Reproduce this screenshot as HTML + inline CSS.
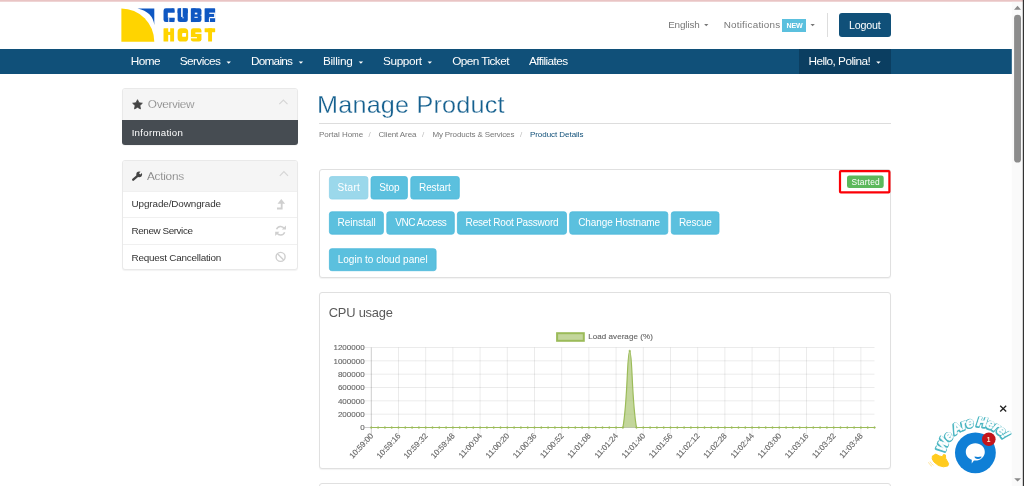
<!DOCTYPE html>
<html><head><meta charset="utf-8"><title>Manage Product</title>
<style>
*{box-sizing:border-box;margin:0;padding:0}
html,body{width:1024px;height:486px;overflow:hidden;background:#fff;font-family:"Liberation Sans",sans-serif;color:#333}
#page{position:absolute;left:0;top:0;width:1024px;height:486px;overflow:hidden;will-change:transform;background:#fff}
.abs{position:absolute}
.t{position:absolute;white-space:nowrap;line-height:1}
.panel{position:absolute;background:#fff;border:1px solid #e0e0e0;border-radius:3px;box-shadow:0 1px 1px rgba(0,0,0,.05)}
</style></head><body>
<div id="page">
<div class="abs" style="left:0;top:0;width:1023px;height:1px;background:#e9c4c4"></div><div class="abs" style="left:0;top:1px;width:1023px;height:1px;background:#efd4d4"></div>
<svg class="abs" style="left:0;top:0" width="300" height="48" viewBox="0 0 300 48">
<path d="M121.4 8.4 A32.9 33.4 0 0 1 154.3 41.8 H121.4Z" fill="#ffd400"/>
<path d="M137.5 8.4 H154.3 V25 Q152.8 11.8 137.5 8.4Z" fill="#0f57c2"/>
<g transform="translate(160 6) scale(0.078247)">
<rect x="45" y="30" width="140" height="175" rx="30" fill="#0f57c2"/>
<rect x="150" y="30" width="35" height="55" rx="0" fill="#0f57c2"/>
<rect x="150" y="150" width="35" height="55" rx="0" fill="#0f57c2"/>
<rect x="100" y="86" width="95" height="64" rx="0" fill="#fff"/>
<rect x="106" y="152" width="12" height="56" rx="0" fill="#fff"/>
<rect x="225" y="30" width="130" height="175" rx="32" fill="#0f57c2"/>
<rect x="225" y="30" width="130" height="60" rx="0" fill="#0f57c2"/>
<rect x="270" y="24" width="20" height="116" rx="0" fill="#fff"/>
<rect x="288" y="138" width="12" height="20" rx="0" fill="#fff"/>
<rect x="395" y="30" width="135" height="175" rx="28" fill="#0f57c2"/>
<rect x="395" y="30" width="60" height="175" rx="0" fill="#0f57c2"/>
<rect x="445" y="85" width="32" height="22" rx="0" fill="#fff"/>
<rect x="440" y="138" width="42" height="13" rx="0" fill="#fff"/>
<rect x="520" y="111" width="14" height="15" rx="0" fill="#fff"/>
<rect x="570" y="30" width="135" height="175" rx="8" fill="#0f57c2"/>
<rect x="630" y="85" width="80" height="16" rx="0" fill="#fff"/>
<rect x="692" y="100" width="18" height="42" rx="0" fill="#fff"/>
<rect x="630" y="140" width="80" height="16" rx="0" fill="#fff"/>
<rect x="625" y="156" width="14" height="46" rx="0" fill="#fff"/>
<rect x="45" y="285" width="135" height="170" rx="6" fill="#ffd400"/>
<rect x="105" y="278" width="25" height="52" rx="0" fill="#fff"/>
<rect x="105" y="370" width="25" height="90" rx="0" fill="#fff"/>
<rect x="225" y="285" width="135" height="170" rx="46" fill="#ffd400"/>
<rect x="283" y="344" width="50" height="50" rx="6" fill="#fff"/>
<rect x="395" y="285" width="135" height="170" rx="30" fill="#ffd400"/>
<rect x="452" y="338" width="84" height="18" rx="0" fill="#fff"/>
<rect x="388" y="398" width="84" height="15" rx="0" fill="#fff"/>
<rect x="570" y="285" width="135" height="50" rx="5" fill="#ffd400"/>
<rect x="615" y="285" width="50" height="170" rx="5" fill="#ffd400"/>
</g>
</svg>

<!-- header right -->
<div class="abs" style="left:781.9px;top:18.5px;width:24.6px;height:13.4px;background:#5bc0de"></div>
<div class="abs" style="left:827.2px;top:13.2px;width:1px;height:23.4px;background:#ddd"></div>
<div class="abs" style="left:838.8px;top:13.4px;width:52.5px;height:23.2px;background:#105079;border-radius:3px"></div>

<!-- nav -->
<div class="abs" style="left:0;top:49px;width:1011.7px;height:24.9px;background:#105079"></div>
<div class="abs" style="left:798.7px;top:49px;width:92.3px;height:24.9px;background:#0b3e61"></div>

<!-- sidebar -->
<div class="panel" style="left:121.7px;top:88.1px;width:176.6px;height:57.2px;border-color:#e9e9e9;overflow:hidden">
  <div class="abs" style="left:0;top:0;width:100%;height:31.2px;background:#f5f5f5"></div>
</div>
<div class="abs" style="left:122px;top:120px;width:176px;height:25.4px;background:#464c52;border-radius:0 0 3px 3px"></div>
<div class="panel" style="left:121.7px;top:159.9px;width:176.8px;height:110.6px;border-color:#e9e9e9;overflow:hidden">
  <div class="abs" style="left:0;top:0;width:100%;height:30.6px;background:#f5f5f5"></div>
  <div class="abs" style="left:0;top:30.4px;width:100%;height:1px;background:#f0f0f0"></div>
  <div class="abs" style="left:0;top:56.6px;width:100%;height:1px;background:#f0f0f0"></div>
  <div class="abs" style="left:0;top:83.2px;width:100%;height:1px;background:#f0f0f0"></div>
</div>
<svg class="abs" style="left:0;top:0" width="320" height="300" viewBox="0 0 320 300">
<path d="M137.50,99.70L138.97,102.78L142.35,103.22L139.88,105.57L140.50,108.93L137.50,107.30L134.50,108.93L135.12,105.57L132.65,103.22L136.03,102.78Z" fill="#444" stroke="#444" stroke-width="0.8" stroke-linejoin="round"/>
<path d="M279.3 104.2 L283.4 100.1 L287.5 104.2" fill="none" stroke="#d6d6d6" stroke-width="1.2"/>
<path d="M279.8 175.8 L283.9 171.7 L288 175.8" fill="none" stroke="#d6d6d6" stroke-width="1.2"/>
<g><path d="M133.2 179.7 L138.2 175.4" stroke="#444" stroke-width="2.3" stroke-linecap="round"/><circle cx="139.2" cy="174.3" r="2.85" fill="#444"/><path d="M139.7 173.8 L143.2 170.3" stroke="#f5f5f5" stroke-width="1.9"/></g>
<path d="M277.0 208.5 H281.7 V203" fill="none" stroke="#cfcfcf" stroke-width="1.8"/><path d="M277.5 203.8 L281.3 199.1 L285.1 203.8Z" fill="#cfcfcf"/>
<path d="M276.56 229.23 A4.3 4.3 0 0 1 284.32 228.55" fill="none" stroke="#cfcfcf" stroke-width="1.5"/>
<path d="M284.64 232.17 A4.3 4.3 0 0 1 276.88 232.85" fill="none" stroke="#cfcfcf" stroke-width="1.5"/>
<path d="M286 225.4 V229.6 H281.8Z" fill="#cfcfcf"/><path d="M275.2 236 V231.8 H279.4Z" fill="#cfcfcf"/>
<circle cx="280.6" cy="256.9" r="4.5" fill="none" stroke="#cfcfcf" stroke-width="1.4"/><path d="M277.5 253.8 L283.7 260" stroke="#cfcfcf" stroke-width="1.4"/>
</svg>

<!-- main -->
<div class="abs" style="left:319.3px;top:123px;width:571.7px;height:1px;background:#ddd"></div>

<div class="panel" style="left:318.9px;top:168.8px;width:572.4px;height:109.2px"></div>
<svg class="abs" style="left:0;top:160px" width="900" height="130" viewBox="0 160 900 130">
<rect x="329.4" y="176.55" width="38.5" height="22.50" rx="2.4" fill="#9bd8eb" stroke="#8fd2e8" stroke-width="0.8"/>
<rect x="371.0" y="176.55" width="36.4" height="22.50" rx="2.4" fill="#5bc0de" stroke="#4cb9da" stroke-width="0.8"/>
<rect x="410.8" y="176.55" width="48.5" height="22.50" rx="2.4" fill="#5bc0de" stroke="#4cb9da" stroke-width="0.8"/>
<rect x="329.4" y="211.80" width="54.0" height="22.40" rx="2.4" fill="#5bc0de" stroke="#4cb9da" stroke-width="0.8"/>
<rect x="386.8" y="211.80" width="67.5" height="22.40" rx="2.4" fill="#5bc0de" stroke="#4cb9da" stroke-width="0.8"/>
<rect x="457.4" y="211.80" width="109.1" height="22.40" rx="2.4" fill="#5bc0de" stroke="#4cb9da" stroke-width="0.8"/>
<rect x="569.7" y="211.80" width="98.1" height="22.40" rx="2.4" fill="#5bc0de" stroke="#4cb9da" stroke-width="0.8"/>
<rect x="671.3" y="211.80" width="47.7" height="22.40" rx="2.4" fill="#5bc0de" stroke="#4cb9da" stroke-width="0.8"/>
<rect x="329.4" y="248.70" width="106.7" height="22.00" rx="2.4" fill="#5bc0de" stroke="#4cb9da" stroke-width="0.8"/>
</svg>
<svg class="abs" style="left:830px;top:164px" width="70" height="36" viewBox="830 164 70 36">
<rect x="840" y="171.2" width="49.4" height="21.2" rx="0.8" fill="none" stroke="#fb0007" stroke-width="2.2"/>
<rect x="847" y="175.4" width="36.7" height="12.7" rx="2.4" fill="#5cb85c"/>
</svg>

<div class="panel" style="left:318.9px;top:291.8px;width:572.4px;height:176.8px"></div>
<div class="panel" style="left:318.9px;top:482.6px;width:572.4px;height:50px"></div>

<svg class="abs" style="left:0;top:0" width="1012" height="80" viewBox="0 0 1012 80"><path d="M704.1 23.9h4.3l-2.15 2.3z" fill="#777"/><path d="M810.5 23.9h4.3l-2.15 2.3z" fill="#777"/><path d="M226.5 61.5h4.4l-2.20 2.3z" fill="#fff"/><path d="M298.7 61.5h4.4l-2.20 2.3z" fill="#fff"/><path d="M358.7 61.5h4.4l-2.20 2.3z" fill="#fff"/><path d="M427.6 61.5h4.4l-2.20 2.3z" fill="#fff"/><path d="M876.2 61.5h4.4l-2.20 2.3z" fill="#fff"/></svg>
<div class="t" style="left:668.13px;top:20px;font-size:9.9px;color:#777;letter-spacing:-0.122px">English</div>
<div class="t" style="left:723.67px;top:20px;font-size:9.9px;color:#777;letter-spacing:0.224px">Notifications</div>
<div class="t" style="left:786.51px;top:23px;font-size:7.1px;color:#fff;letter-spacing:-0.160px;font-weight:700">NEW</div>
<div class="t" style="left:848.94px;top:20px;font-size:10.7px;color:#fff;letter-spacing:-0.169px">Logout</div>
<div class="t" style="left:130.83px;top:56px;font-size:11.8px;color:#fff;letter-spacing:-0.566px">Home</div>
<div class="t" style="left:179.70px;top:56px;font-size:11.8px;color:#fff;letter-spacing:-0.575px">Services</div>
<div class="t" style="left:251.03px;top:56px;font-size:11.8px;color:#fff;letter-spacing:-0.772px">Domains</div>
<div class="t" style="left:322.93px;top:56px;font-size:11.8px;color:#fff;letter-spacing:-0.272px">Billing</div>
<div class="t" style="left:383.10px;top:56px;font-size:11.8px;color:#fff;letter-spacing:-0.404px">Support</div>
<div class="t" style="left:452.14px;top:56px;font-size:11.8px;color:#fff;letter-spacing:-0.558px">Open Ticket</div>
<div class="t" style="left:529.01px;top:56px;font-size:11.8px;color:#fff;letter-spacing:-0.581px">Affiliates</div>
<div class="t" style="left:808.43px;top:56px;font-size:11.8px;color:#fff;letter-spacing:-0.544px">Hello, Polina!</div>
<div class="t" style="left:147.84px;top:99px;font-size:11.8px;color:#6c6c6c;letter-spacing:-0.345px;-webkit-text-stroke:0.25px #f5f5f5">Overview</div>
<div class="t" style="left:131.64px;top:128px;font-size:9.7px;color:#fff;letter-spacing:0.276px">Information</div>
<div class="t" style="left:147.01px;top:171px;font-size:11.8px;color:#6c6c6c;letter-spacing:-0.269px;-webkit-text-stroke:0.25px #f5f5f5">Actions</div>
<div class="t" style="left:131.57px;top:199px;font-size:9.9px;color:#333;letter-spacing:-0.105px">Upgrade/Downgrade</div>
<div class="t" style="left:131.54px;top:226px;font-size:9.9px;color:#333;letter-spacing:-0.420px">Renew Service</div>
<div class="t" style="left:131.54px;top:253px;font-size:9.9px;color:#333;letter-spacing:-0.219px">Request Cancellation</div>
<div class="t" style="left:317.23px;top:93px;font-size:23.8px;color:#15608f;letter-spacing:0.181px;transform:scaleX(1.06);transform-origin:0 0;-webkit-text-stroke:0.3px #fff">Manage Product</div>
<div class="t" style="left:318.96px;top:131px;font-size:8.0px;color:#777;letter-spacing:-0.026px">Portal Home</div>
<div class="t" style="left:368.47px;top:131px;font-size:8.0px;color:#bbb;letter-spacing:0.000px">/</div>
<div class="t" style="left:378.44px;top:131px;font-size:8.0px;color:#777;letter-spacing:-0.114px">Client Area</div>
<div class="t" style="left:422.07px;top:131px;font-size:8.0px;color:#bbb;letter-spacing:0.000px">/</div>
<div class="t" style="left:432.39px;top:131px;font-size:8.0px;color:#777;letter-spacing:-0.137px">My Products &amp; Services</div>
<div class="t" style="left:519.97px;top:131px;font-size:8.0px;color:#bbb;letter-spacing:0.000px">/</div>
<div class="t" style="left:529.96px;top:131px;font-size:8.0px;color:#105079;letter-spacing:-0.047px">Product Details</div>
<div class="t" style="left:337.53px;top:183px;font-size:10.0px;color:#fff;letter-spacing:0.286px">Start</div>
<div class="t" style="left:379.13px;top:183px;font-size:10.0px;color:#fff;letter-spacing:-0.044px">Stop</div>
<div class="t" style="left:419.02px;top:183px;font-size:10.0px;color:#fff;letter-spacing:-0.087px">Restart</div>
<div class="t" style="left:337.62px;top:218px;font-size:10.0px;color:#fff;letter-spacing:-0.040px">Reinstall</div>
<div class="t" style="left:395.27px;top:218px;font-size:10.0px;color:#fff;letter-spacing:-0.452px">VNC Access</div>
<div class="t" style="left:465.62px;top:218px;font-size:10.0px;color:#fff;letter-spacing:-0.205px">Reset Root Password</div>
<div class="t" style="left:578.24px;top:218px;font-size:10.0px;color:#fff;letter-spacing:-0.104px">Change Hostname</div>
<div class="t" style="left:679.12px;top:218px;font-size:10.0px;color:#fff;letter-spacing:-0.240px">Rescue</div>
<div class="t" style="left:337.63px;top:255px;font-size:10.0px;color:#fff;letter-spacing:0.025px">Login to cloud panel</div>
<div class="t" style="left:851.49px;top:178px;font-size:8.4px;color:#fff;letter-spacing:0.205px">Started</div>
<div class="t" style="left:328.74px;top:307px;font-size:12.9px;color:#5a5a5a;letter-spacing:-0.221px">CPU usage</div>
<svg class="abs" style="left:0;top:0" width="1012" height="486" viewBox="0 0 1012 486" font-family="Liberation Sans, sans-serif">
<path d="M364.63 347.50H874.50M364.63 360.83H874.50M364.63 374.17H874.50M364.63 387.50H874.50M364.63 400.83H874.50M364.63 414.17H874.50M398.50 347.50V434.17M425.70 347.50V434.17M452.90 347.50V434.17M480.10 347.50V434.17M507.30 347.50V434.17M534.50 347.50V434.17M561.70 347.50V434.17M588.90 347.50V434.17M616.10 347.50V434.17M643.30 347.50V434.17M670.50 347.50V434.17M697.70 347.50V434.17M724.90 347.50V434.17M752.10 347.50V434.17M779.30 347.50V434.17M806.50 347.50V434.17M833.70 347.50V434.17M860.90 347.50V434.17" stroke="#000" stroke-opacity="0.1" stroke-width="0.8" fill="none"/>
<path d="M371.30 347.50V434.17M364.63 427.50H874.50" stroke="#000" stroke-opacity="0.25" stroke-width="0.8" fill="none"/>
<text x="364.63" y="350.40" font-size="8" fill="#666" stroke="#666" stroke-width="0.12" text-anchor="end">1200000</text>
<text x="364.63" y="363.73" font-size="8" fill="#666" stroke="#666" stroke-width="0.12" text-anchor="end">1000000</text>
<text x="364.63" y="377.07" font-size="8" fill="#666" stroke="#666" stroke-width="0.12" text-anchor="end">800000</text>
<text x="364.63" y="390.40" font-size="8" fill="#666" stroke="#666" stroke-width="0.12" text-anchor="end">600000</text>
<text x="364.63" y="403.73" font-size="8" fill="#666" stroke="#666" stroke-width="0.12" text-anchor="end">400000</text>
<text x="364.63" y="417.07" font-size="8" fill="#666" stroke="#666" stroke-width="0.12" text-anchor="end">200000</text>
<text x="364.63" y="430.40" font-size="8" fill="#666" stroke="#666" stroke-width="0.12" text-anchor="end">0</text>
<text transform="translate(371.60 434.2) rotate(-47.5)" x="0" y="2.9" font-size="8" fill="#666" stroke="#666" stroke-width="0.12" text-anchor="end">10:59:00</text>
<text transform="translate(398.80 434.2) rotate(-47.5)" x="0" y="2.9" font-size="8" fill="#666" stroke="#666" stroke-width="0.12" text-anchor="end">10:59:16</text>
<text transform="translate(426.00 434.2) rotate(-47.5)" x="0" y="2.9" font-size="8" fill="#666" stroke="#666" stroke-width="0.12" text-anchor="end">10:59:32</text>
<text transform="translate(453.20 434.2) rotate(-47.5)" x="0" y="2.9" font-size="8" fill="#666" stroke="#666" stroke-width="0.12" text-anchor="end">10:59:48</text>
<text transform="translate(480.40 434.2) rotate(-47.5)" x="0" y="2.9" font-size="8" fill="#666" stroke="#666" stroke-width="0.12" text-anchor="end">11:00:04</text>
<text transform="translate(507.60 434.2) rotate(-47.5)" x="0" y="2.9" font-size="8" fill="#666" stroke="#666" stroke-width="0.12" text-anchor="end">11:00:20</text>
<text transform="translate(534.80 434.2) rotate(-47.5)" x="0" y="2.9" font-size="8" fill="#666" stroke="#666" stroke-width="0.12" text-anchor="end">11:00:36</text>
<text transform="translate(562.00 434.2) rotate(-47.5)" x="0" y="2.9" font-size="8" fill="#666" stroke="#666" stroke-width="0.12" text-anchor="end">11:00:52</text>
<text transform="translate(589.20 434.2) rotate(-47.5)" x="0" y="2.9" font-size="8" fill="#666" stroke="#666" stroke-width="0.12" text-anchor="end">11:01:08</text>
<text transform="translate(616.40 434.2) rotate(-47.5)" x="0" y="2.9" font-size="8" fill="#666" stroke="#666" stroke-width="0.12" text-anchor="end">11:01:24</text>
<text transform="translate(643.60 434.2) rotate(-47.5)" x="0" y="2.9" font-size="8" fill="#666" stroke="#666" stroke-width="0.12" text-anchor="end">11:01:40</text>
<text transform="translate(670.80 434.2) rotate(-47.5)" x="0" y="2.9" font-size="8" fill="#666" stroke="#666" stroke-width="0.12" text-anchor="end">11:01:56</text>
<text transform="translate(698.00 434.2) rotate(-47.5)" x="0" y="2.9" font-size="8" fill="#666" stroke="#666" stroke-width="0.12" text-anchor="end">11:02:12</text>
<text transform="translate(725.20 434.2) rotate(-47.5)" x="0" y="2.9" font-size="8" fill="#666" stroke="#666" stroke-width="0.12" text-anchor="end">11:02:28</text>
<text transform="translate(752.40 434.2) rotate(-47.5)" x="0" y="2.9" font-size="8" fill="#666" stroke="#666" stroke-width="0.12" text-anchor="end">11:02:44</text>
<text transform="translate(779.60 434.2) rotate(-47.5)" x="0" y="2.9" font-size="8" fill="#666" stroke="#666" stroke-width="0.12" text-anchor="end">11:03:00</text>
<text transform="translate(806.80 434.2) rotate(-47.5)" x="0" y="2.9" font-size="8" fill="#666" stroke="#666" stroke-width="0.12" text-anchor="end">11:03:16</text>
<text transform="translate(834.00 434.2) rotate(-47.5)" x="0" y="2.9" font-size="8" fill="#666" stroke="#666" stroke-width="0.12" text-anchor="end">11:03:32</text>
<text transform="translate(861.20 434.2) rotate(-47.5)" x="0" y="2.9" font-size="8" fill="#666" stroke="#666" stroke-width="0.12" text-anchor="end">11:03:48</text>
<path d="M371.30 427.50L622.90 427.50C627.90 399.20 626.98 351.00 629.70 351.00C632.42 351.00 631.50 399.20 636.50 427.50L874.50 427.50Z" fill="rgba(155,187,89,0.6)" stroke="none"/>
<path d="M371.30 427.50L622.90 427.50C627.90 399.20 626.98 351.00 629.70 351.00C632.42 351.00 631.50 399.20 636.50 427.50L874.50 427.50" fill="none" stroke="#9bbb59" stroke-width="1.2" stroke-linejoin="round"/>
<g fill="#9bbb59" stroke="#9bbb59" stroke-width="0.6"><circle cx="371.30" cy="427.50" r="0.85"/><circle cx="378.10" cy="427.50" r="0.85"/><circle cx="384.90" cy="427.50" r="0.85"/><circle cx="391.70" cy="427.50" r="0.85"/><circle cx="398.50" cy="427.50" r="0.85"/><circle cx="405.30" cy="427.50" r="0.85"/><circle cx="412.10" cy="427.50" r="0.85"/><circle cx="418.90" cy="427.50" r="0.85"/><circle cx="425.70" cy="427.50" r="0.85"/><circle cx="432.50" cy="427.50" r="0.85"/><circle cx="439.30" cy="427.50" r="0.85"/><circle cx="446.10" cy="427.50" r="0.85"/><circle cx="452.90" cy="427.50" r="0.85"/><circle cx="459.70" cy="427.50" r="0.85"/><circle cx="466.50" cy="427.50" r="0.85"/><circle cx="473.30" cy="427.50" r="0.85"/><circle cx="480.10" cy="427.50" r="0.85"/><circle cx="486.90" cy="427.50" r="0.85"/><circle cx="493.70" cy="427.50" r="0.85"/><circle cx="500.50" cy="427.50" r="0.85"/><circle cx="507.30" cy="427.50" r="0.85"/><circle cx="514.10" cy="427.50" r="0.85"/><circle cx="520.90" cy="427.50" r="0.85"/><circle cx="527.70" cy="427.50" r="0.85"/><circle cx="534.50" cy="427.50" r="0.85"/><circle cx="541.30" cy="427.50" r="0.85"/><circle cx="548.10" cy="427.50" r="0.85"/><circle cx="554.90" cy="427.50" r="0.85"/><circle cx="561.70" cy="427.50" r="0.85"/><circle cx="568.50" cy="427.50" r="0.85"/><circle cx="575.30" cy="427.50" r="0.85"/><circle cx="582.10" cy="427.50" r="0.85"/><circle cx="588.90" cy="427.50" r="0.85"/><circle cx="595.70" cy="427.50" r="0.85"/><circle cx="602.50" cy="427.50" r="0.85"/><circle cx="609.30" cy="427.50" r="0.85"/><circle cx="616.10" cy="427.50" r="0.85"/><circle cx="622.90" cy="427.50" r="0.85"/><circle cx="629.70" cy="351.00" r="0.85"/><circle cx="636.50" cy="427.50" r="0.85"/><circle cx="643.30" cy="427.50" r="0.85"/><circle cx="650.10" cy="427.50" r="0.85"/><circle cx="656.90" cy="427.50" r="0.85"/><circle cx="663.70" cy="427.50" r="0.85"/><circle cx="670.50" cy="427.50" r="0.85"/><circle cx="677.30" cy="427.50" r="0.85"/><circle cx="684.10" cy="427.50" r="0.85"/><circle cx="690.90" cy="427.50" r="0.85"/><circle cx="697.70" cy="427.50" r="0.85"/><circle cx="704.50" cy="427.50" r="0.85"/><circle cx="711.30" cy="427.50" r="0.85"/><circle cx="718.10" cy="427.50" r="0.85"/><circle cx="724.90" cy="427.50" r="0.85"/><circle cx="731.70" cy="427.50" r="0.85"/><circle cx="738.50" cy="427.50" r="0.85"/><circle cx="745.30" cy="427.50" r="0.85"/><circle cx="752.10" cy="427.50" r="0.85"/><circle cx="758.90" cy="427.50" r="0.85"/><circle cx="765.70" cy="427.50" r="0.85"/><circle cx="772.50" cy="427.50" r="0.85"/><circle cx="779.30" cy="427.50" r="0.85"/><circle cx="786.10" cy="427.50" r="0.85"/><circle cx="792.90" cy="427.50" r="0.85"/><circle cx="799.70" cy="427.50" r="0.85"/><circle cx="806.50" cy="427.50" r="0.85"/><circle cx="813.30" cy="427.50" r="0.85"/><circle cx="820.10" cy="427.50" r="0.85"/><circle cx="826.90" cy="427.50" r="0.85"/><circle cx="833.70" cy="427.50" r="0.85"/><circle cx="840.50" cy="427.50" r="0.85"/><circle cx="847.30" cy="427.50" r="0.85"/><circle cx="854.10" cy="427.50" r="0.85"/><circle cx="860.90" cy="427.50" r="0.85"/><circle cx="867.70" cy="427.50" r="0.85"/><circle cx="874.50" cy="427.50" r="0.85"/></g>
<rect x="557.1" y="333.2" width="26.7" height="7.6" fill="rgba(155,187,89,0.6)" stroke="#9bbb59" stroke-width="2"/>
<text x="588.2" y="338.8" font-size="8" fill="#666" stroke="#666" stroke-width="0.12" textLength="64.6" lengthAdjust="spacing">Load average (%)</text>
</svg>
<svg class="abs" style="left:900px;top:390px;overflow:visible" width="124" height="96" viewBox="900 390 124 96" font-family="Liberation Sans, sans-serif">
<defs><path id="arc" d="M945.36 452.52 A33.0 33.0 0 0 1 1004.40 439.70"/></defs>
<circle cx="975.4" cy="452.8" r="20.4" fill="#0f7fd6"/>
<path d="M975.3 443.3 c5.4 0 9.5 3.8 9.5 8.6 s-4.1 8.6 -9.5 8.6 c-0.5 0 -0.9 0 -1.4 -0.1 l-2.2 3.1 l0.1 -3.8 c-3.6 -1.3 -6 -4.3 -6 -7.8 c0 -4.8 4.1 -8.6 9.5 -8.6z" fill="#fff"/>
<path d="M974.5 456.6 q3.5 0.9 7 0 a3.5 2.4 0 0 1 -7 0z" fill="#0f7fd6"/>
<circle cx="988.8" cy="439.3" r="6.8" fill="#c3151b"/>
<text x="988.7" y="441.6" font-size="6.6" font-weight="bold" fill="#fff3d6" text-anchor="middle">1</text>
<path d="M1000.2 405.8 L1006.2 411.4 M1006.2 405.8 L1000.2 411.4" stroke="#222" stroke-width="1.3" fill="none"/>
<text font-size="13.4" font-weight="bold" font-style="italic" fill="#4bb6c2" stroke="#4bb6c2" stroke-width="2.7" stroke-linejoin="round" transform="translate(-0.5 0.7)"><textPath href="#arc" textLength="75.3" lengthAdjust="spacing">We Are Here!</textPath></text>
<text font-size="13.4" font-weight="bold" font-style="italic" fill="#fff" stroke="#fff" stroke-width="0.7" stroke-linejoin="round"><textPath href="#arc" textLength="75.3" lengthAdjust="spacing">We Are Here!</textPath></text>
<path d="M932.4 456 L935.8 454.1 L939.4 455.9 L942.4 456.8 L943.4 454.6 L945.4 454.9 L945.7 458.4 L948.6 463.6 L947.9 465.9 L943.5 466.8 L938.4 465.5 L933.9 461.9 L932.2 458.9Z" fill="#ffcb1f" stroke="#ffcb1f" stroke-width="1.0" stroke-linejoin="round"/>
<path d="M928.6 462.6 q0.9 2.3 3.0 3.5 M930.2 461.9 q0.9 2.0 3.0 3.2" stroke="#ffe08a" stroke-width="0.8" fill="none" stroke-linecap="round"/>
</svg>

<!-- scrollbar -->
<svg class="abs" style="left:1008px;top:0" width="16" height="486" viewBox="1008 0 16 486">
<rect x="1011.8" y="1.9" width="11.2" height="485" fill="#fafafa"/>
<rect x="1022.8" y="0" width="1.2" height="486" fill="#333"/>
<path d="M1014 9.8 L1017.5 5.7 L1021 9.8Z" fill="#8a8a8a"/>
<path d="M1014.2 478.2 L1017.6 481.6 L1021 478.2Z" fill="#8a8a8a"/>
<rect x="1014.1" y="14.8" width="6.9" height="147.8" rx="3.45" fill="#8c8c8c"/>
</svg>
</div>
</body></html>
